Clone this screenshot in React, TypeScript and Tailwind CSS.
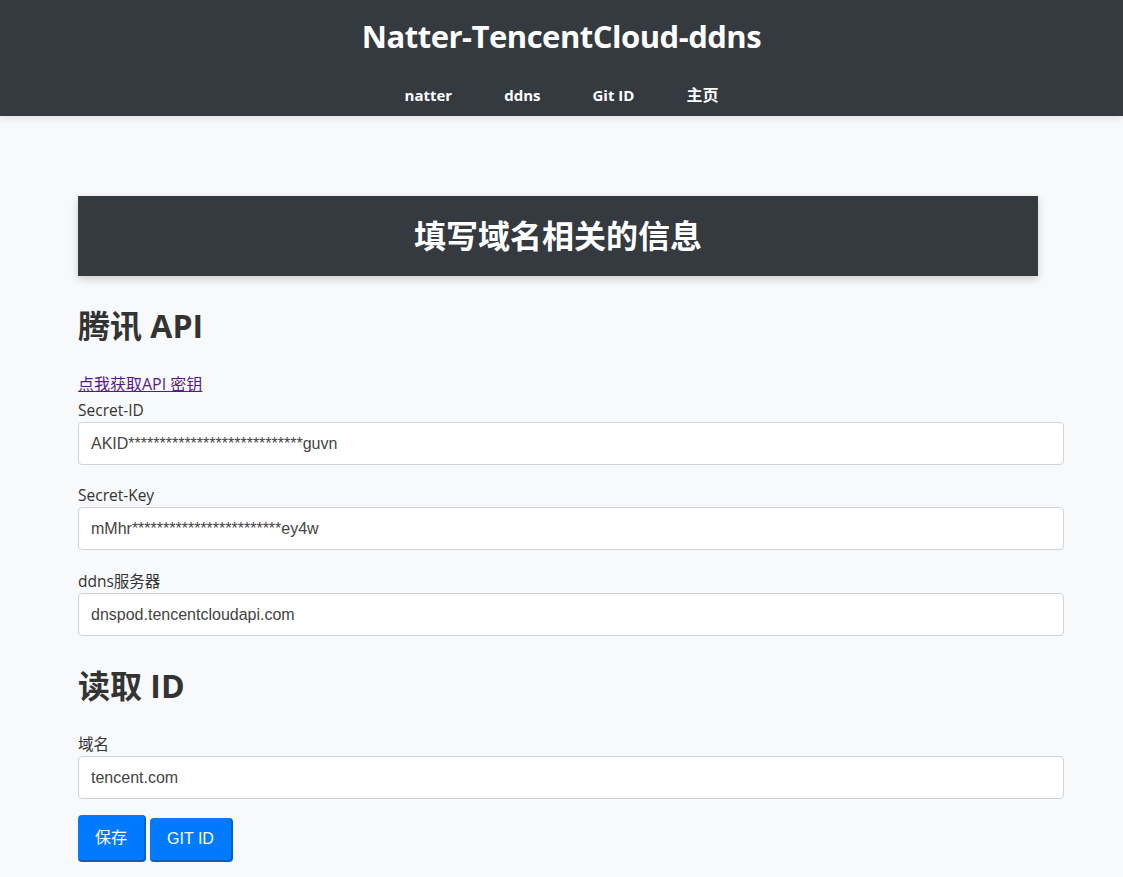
import React from "react";

const sans = { fontFamily: '"Open Sans", "Noto Sans", "Noto Sans CJK SC", sans-serif' };
const arial = { fontFamily: '"Liberation Sans", Arial, "Noto Sans CJK SC", sans-serif' };

function Field({ label, value, mt }: { label: string; value: string; mt: string }) {
  return (
    <div className={mt}>
      <div className="text-[15.5px] leading-[22px] text-[#333]" style={sans}>{label}</div>
      <div
        className="mt-[1px] h-[43px] w-[986px] rounded-[4px] border border-[#ced4da] bg-white px-[12px] flex items-center text-[16px] text-[#444]"
        style={arial}
      >
        {value}
      </div>
    </div>
  );
}

export default function App() {
  return (
    <div className="min-h-[877px] bg-[#f8f9fa]" style={sans}>
      <header className="h-[116px] bg-[#343a40] shadow-[0_2px_8px_rgba(0,0,0,0.12)] flex flex-col items-center">
        <h1 className="mt-[15px] text-[31px] leading-[42px] font-bold text-white tracking-[-0.5px]">Natter-TencentCloud-ddns</h1>
        <nav className="mt-[27px] flex gap-[52px] text-[15px] leading-[22px] font-bold text-white">
          <span>natter</span>
          <span>ddns</span>
          <span>Git ID</span>
          <span className="text-[16px]">主页</span>
        </nav>
      </header>
      <main className="pl-[78px] pt-[80px] pb-[15px]">
        <div className="h-[80px] w-[960px] bg-[#343a40] shadow-[0_3px_8px_rgba(0,0,0,0.18)] flex items-center justify-center">
          <span className="text-[32px] font-bold text-white">填写域名相关的信息</span>
        </div>
        <h2 className="mt-[31px] text-[32px] leading-[38px] font-bold text-[#333]">腾讯 API</h2>
        <a href="#" className="mt-[28px] block w-fit text-[16px] leading-[22px] text-[#551a8b] underline">点我获取API 密钥</a>
        <Field mt="mt-[4px]" label="Secret-ID" value="AKID****************************guvn" />
        <Field mt="mt-[19px]" label="Secret-Key" value="mMhr************************ey4w" />
        <Field mt="mt-[20px]" label="ddns服务器" value="dnspod.tencentcloudapi.com" />
        <h2 className="mt-[31px] text-[32px] leading-[38px] font-bold text-[#333]">读取 ID</h2>
        <Field mt="mt-[28px]" label="域名" value="tencent.com" />
        <div className="mt-[16px] flex items-end gap-[4px]" style={arial}>
          <button className="h-[47px] w-[68px] rounded-[4px] bg-[#007bff] text-white text-[16px] border-b-[2px] border-r-[2px] border-[#0060c8]">保存</button>
          <button className="h-[44px] w-[83px] rounded-[4px] bg-[#007bff] text-white text-[16px] border-b-[2px] border-r-[2px] border-[#0060c8]">GIT ID</button>
        </div>
      </main>
    </div>
  );
}
